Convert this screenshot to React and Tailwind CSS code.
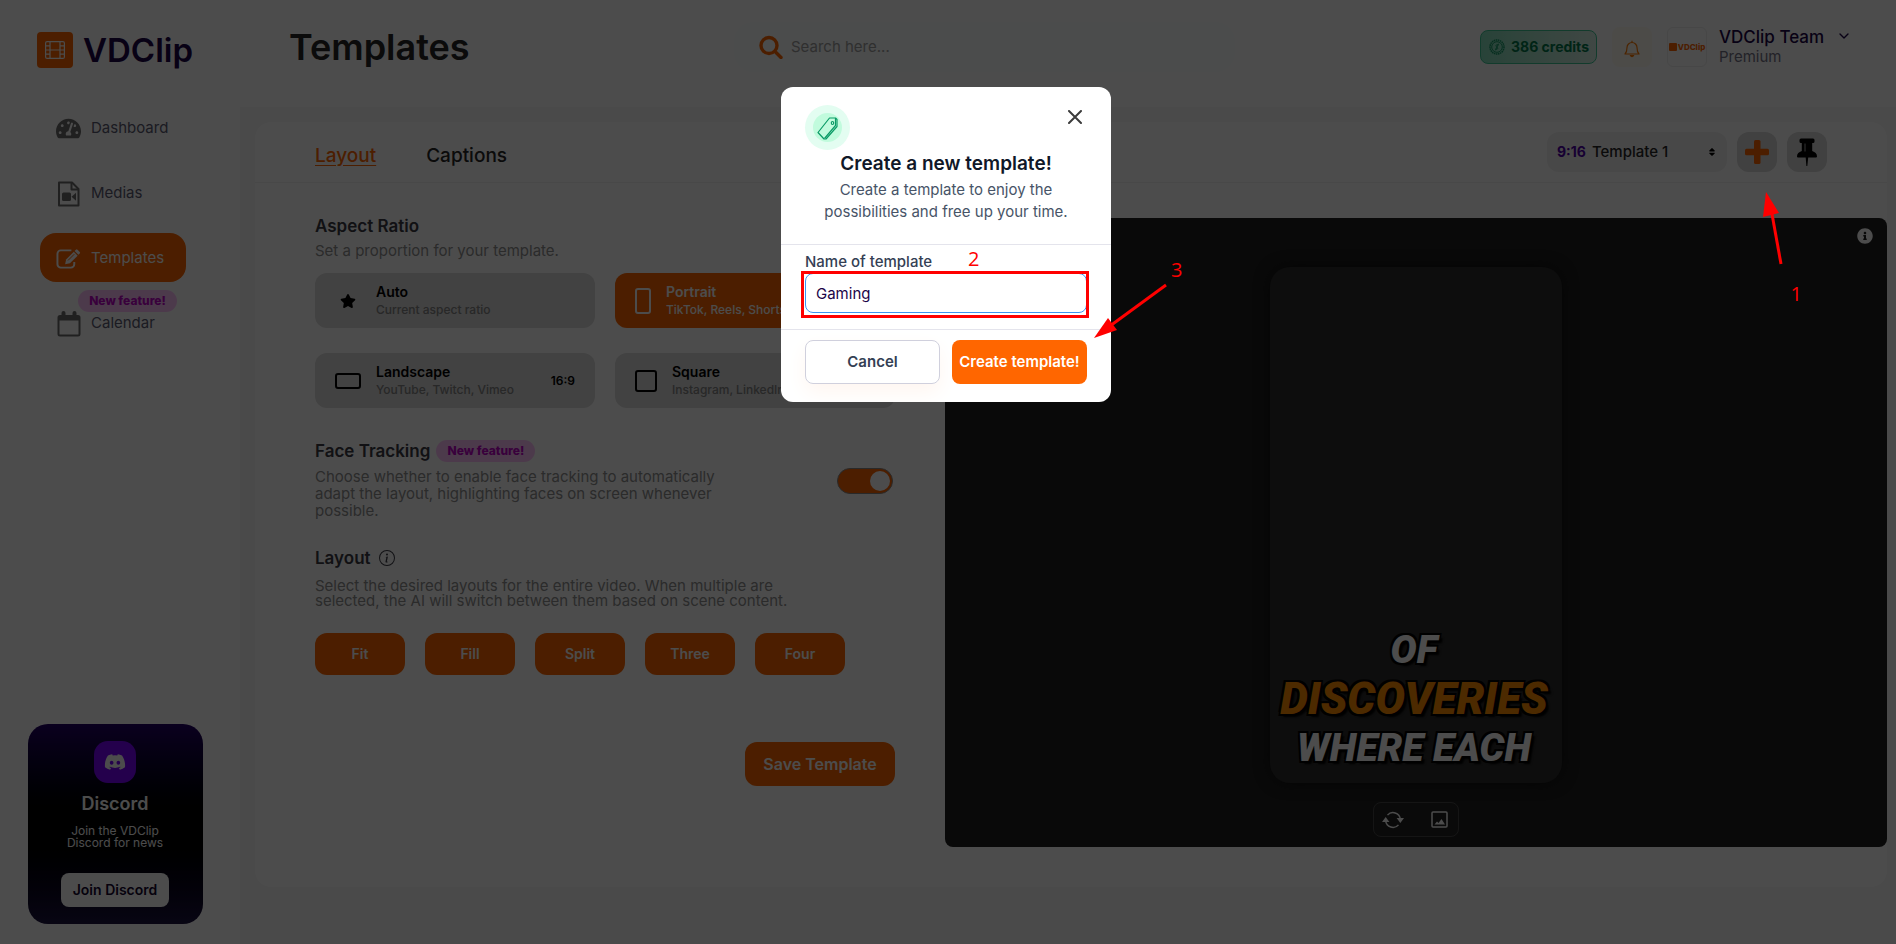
import React, { useState } from 'react';
import { FaDiscord, FaSort, FaStar, FaTachometerAlt, FaInfoCircle } from 'react-icons/fa';
import { BsInfoCircle } from 'react-icons/bs';
import { FiChevronDown } from 'react-icons/fi';

const MediaIcon = () => (
  <svg viewBox="0 0 24 26" className="h-[26px] w-6" fill="none" stroke="currentColor" strokeWidth="2" strokeLinejoin="round">
    <path d="M2 1.500h13l6.500 6.500v16.500H2z" />
    <path d="M14.500 1.500V8.500h7" />
    <rect x="5" y="11.500" width="9" height="8.500" rx="1.500" fill="currentColor" stroke="none" />
    <path d="M14.500 15.700l4.500-4v8z" fill="currentColor" stroke="none" />
  </svg>
);

const EditIcon = () => (
  <svg viewBox="0 0 26 22" className="h-[22px] w-[26px]" fill="none" stroke="currentColor" strokeWidth="2">
    <path d="M16 2H5a3.500 3.500 0 0 0-3.500 3.500v11A3.500 3.500 0 0 0 5 20h10.500a3.500 3.500 0 0 0 3.500-3.500V14" />
    <path d="M9.500 16.500l1-5L18.500 3.500l4 4-8 8z" fill="currentColor" stroke="none" />
    <path d="M19.300 2.700l1.400-1.400a1.200 1.200 0 0 1 1.700 0l2.300 2.300a1.200 1.200 0 0 1 0 1.700l-1.400 1.400z" fill="currentColor" stroke="none" />
    <path d="M12.500 12.500l6.500-6.500" stroke="#ff6600" strokeWidth="1" />
  </svg>
);

const CalendarIcon = () => (
  <svg viewBox="0 0 24 26" className="h-[26px] w-6" fill="none" stroke="currentColor" strokeWidth="2">
    <rect x="1.500" y="5" width="21" height="19.500" rx="1.500" />
    <path d="M1.500 5h21v4.500h-21z" fill="currentColor" stroke="none" />
    <path d="M6.500 2v5M17.500 2v5" strokeWidth="4" strokeLinecap="round" />
  </svg>
);

const navItems = [
  { label: 'Dashboard', icon: <FaTachometerAlt className="text-[25px]" /> },
  { label: 'Medias', icon: <MediaIcon /> },
  { label: 'Templates', icon: <EditIcon />, active: true },
  { label: 'Calendar', icon: <CalendarIcon />, isNew: true }
];

const ratios = [
  { name: 'Auto', hint: 'Current aspect ratio', ratio: '', shape: 'star' },
  { name: 'Portrait', hint: 'TikTok, Reels, Shorts', ratio: '9:16', shape: 'w-4 h-[26px]' },
  { name: 'Landscape', hint: 'YouTube, Twitch, Vimeo', ratio: '16:9', shape: 'w-[26px] h-4' },
  { name: 'Square', hint: 'Instagram, LinkedIn', ratio: '1:1', shape: 'w-[22px] h-[22px]' }
];

const layouts = ['Fit', 'Fill', 'Split', 'Three', 'Four'];

const NewBadge = () => (
  <span className="flex h-[22px] w-[99px] items-center justify-center rounded-full bg-[#fdc4fb] text-xs font-extrabold text-[#c000c8]">
    New feature!
  </span>
);

const Sidebar = () => (
  <aside className="flex w-60 shrink-0 flex-col bg-white">
    <div className="flex h-[103px] items-start gap-[10px] pt-8 pl-[37px]">
      <div className="flex h-9 w-9 items-center justify-center rounded bg-[#ff6600]">
        <svg viewBox="0 0 20 18" className="h-[18px] w-5" fill="none" stroke="#fff" strokeWidth="1.2">
          <rect x="0.6" y="0.6" width="18.8" height="16.8" rx="1.5" />
          <path d="M5 .6v16.8M15 .6v16.8M5 9h10M.6 4.8H5M.6 9H5M.6 13.2H5M15 4.8h4.4M15 9h4.4M15 13.2h4.4" />
        </svg>
      </div>
      <span className="text-[33px] leading-9 font-semibold text-[#1b0448]">VDClip</span>
    </div>
    <nav className="flex flex-col gap-4 pl-10">
      {navItems.map((item) => (
        <a
          key={item.label}
          href="#"
          className={`relative flex h-[49px] w-[146px] items-center gap-[10px] rounded-2xl pt-[2px] pl-4 text-[15px] ${
            item.active ? 'bg-[#ff6600] text-white' : 'text-[#5b5b72]'
          }`}
        >
          <span className={`flex w-[25px] justify-center ${item.active ? 'text-white' : 'text-[#6d6d6d]'}`}>{item.icon}</span>
          {item.label}
          {item.isNew && (
            <span className="absolute -top-2 left-[38px]">
              <NewBadge />
            </span>
          )}
        </a>
      ))}
    </nav>
    <div className="mt-auto mb-5 ml-7 flex h-[200px] w-[175px] flex-col items-center rounded-[20px] bg-linear-to-b from-[#230068] via-black to-[#1b1340] pt-[17px] pr-px text-white">
      <div className="flex h-[42px] w-[42px] items-center justify-center rounded-[14px] bg-[#7a00ff]">
        <FaDiscord className="text-[22px]" />
      </div>
      <h3 className="mt-[7px] text-lg leading-7 font-semibold">Discord</h3>
      <p className="mt-[7px] text-center text-xs leading-3">
        Join the VDClip
        <br />
        Discord for news
      </p>
      <button className="mt-6 h-[34px] w-[108px] rounded-lg bg-white text-sm font-semibold text-[#14062f]">Join Discord</button>
    </div>
  </aside>
);

const Header = () => (
  <header className="flex h-[107px] items-start bg-white pt-[22px] pr-11 pl-[49px]">
    <h1 className="w-[445px] text-[36px] leading-[50px] font-semibold text-[#262626]">Templates</h1>
    <label className="flex h-[50px] w-[501px] items-center gap-2 rounded-[20px] bg-[#fafdfd] pl-[25px]">
      <svg viewBox="0 0 24 24" className="h-6 w-6" fill="none" stroke="#ff6600" strokeWidth="3.4" strokeLinecap="round">
        <circle cx="10" cy="10.500" r="8" />
        <path d="M17 17.500l5 5" />
      </svg>
      <input type="text" aria-label="Search" placeholder="Search here..." className="w-80 bg-transparent text-[15px] outline-none placeholder:text-[#9f9f9f]" />
    </label>
    <div className="ml-auto flex items-center pt-[5px]">
      <div className="flex h-[34px] w-[117px] items-center gap-[6px] rounded-lg border border-[#3cc795] bg-linear-to-r from-[#86dfbd] to-[#d5efe4] pl-2 text-sm font-bold whitespace-nowrap text-[#00794a]">
        <svg viewBox="0 0 16 16" className="h-4 w-4 shrink-0" fill="none" stroke="#149b68">
          <circle cx="8" cy="8" r="7" strokeWidth="1.500" strokeDasharray="1.500 .6" />
          <circle cx="8" cy="8" r="5.300" />
          <path d="M9.500 6c-2-1.300-3.500 1-1.800 1.900S9 11 6.300 10M9.600 4.700l-3.200 6.600" />
        </svg>
        386 credits
      </div>
      <button aria-label="Notifications" className="ml-[15px] flex h-10 w-10 items-center justify-center rounded-lg bg-[#fffaf1]">
        <svg viewBox="0 0 16 18" className="mt-1 h-[18px] w-4" fill="none" stroke="#ff7a00" strokeWidth="1.200">
          <path d="M1 14c2-2 2-3.500 2-6.500a5 5 0 0 1 10 0c0 3 0 4.500 2 6.500z" strokeLinejoin="round" />
          <path d="M8 2.500V.8M6.500 15.500a1.600 1.600 0 0 0 3 0z" fill="#ff7a00" />
        </svg>
      </button>
      <div className="ml-[15px] flex h-10 w-10 items-center justify-center gap-px rounded-md border border-[#ededed]">
        <span className="h-2 w-2 shrink-0 rounded-[1px] bg-[#ff6600]" />
        <span className="text-[8px] leading-none font-extrabold text-[#ff6600]">VDClip</span>
      </div>
      <div className="ml-3 w-[106px] whitespace-nowrap">
        <p className="text-[17px] leading-5 font-medium text-[#1b0448]">VDClip Team</p>
        <p className="text-[15px] leading-5 text-[#747286]">Premium</p>
      </div>
      <FiChevronDown className="mb-[22px] ml-[11px] text-base text-[#1b0448]" />
    </div>
  </header>
);

const CardHeader = () => (
  <div className="flex h-[61px] items-center justify-between border-b border-[#f0f0f0] px-[60px]">
    <div className="flex gap-[50px] pt-2 text-[19px] font-medium">
      <button className="text-[#ff6600] underline underline-offset-3">Layout</button>
      <button className="text-[#262626]">Captions</button>
    </div>
    <div className="flex gap-[10px]">
      <button className="flex h-10 w-[180px] items-center rounded-xl bg-[#f1f1f1] px-[10px] text-[15px] font-medium">
        <span className="text-sm font-bold text-[#4d00a8]">9:16</span>
        <span className="ml-[6px] text-[#262626]">Template 1</span>
        <FaSort className="ml-auto text-[10px]" />
      </button>
      <button aria-label="New template" className="flex h-10 w-10 items-center justify-center rounded-xl bg-[#d9d9d9] text-[#ff6600]">
        <svg viewBox="0 0 24 24" className="h-6 w-6" fill="currentColor">
          <rect x="9" y="0" width="6.500" height="24" rx="1.500" />
          <rect x="0" y="8.800" width="24" height="6.500" rx="1.500" />
        </svg>
      </button>
      <button aria-label="Pin template" className="flex h-10 w-10 items-center justify-center rounded-xl bg-[#d9d9d9]">
        <svg viewBox="0 0 20 28" className="h-7 w-5" fill="currentColor">
          <path d="M4 .5h12a1.500 1.500 0 0 1 1.500 1.500v1.500A1.500 1.500 0 0 1 16 5h-.8v8c3 1 4.800 2.700 4.800 5.500a1 1 0 0 1-1 1h-7.800L10.300 28h-.9l-.7-8.500H1a1 1 0 0 1-1-1C0 15.700 1.800 14 4.800 13V5H4a1.500 1.500 0 0 1-1.500-1.500V2A1.500 1.500 0 0 1 4 .5z" />
          <path d="M8 5.500v8" stroke="#d9d9d9" strokeWidth=".8" />
        </svg>
      </button>
    </div>
  </div>
);

const RatioCard = ({ item, selected, onSelect }) => (
  <button
    onClick={() => onSelect(item.name)}
    className={`flex h-[55px] items-center gap-[15px] rounded-xl px-5 text-left ${selected ? 'bg-[#ff6600] text-white' : 'bg-[#dcdcdc] text-black'}`}
  >
    {item.shape === 'star' ? (
      <FaStar className="w-[26px] text-sm" />
    ) : (
      <span className={`${item.shape} shrink-0 rounded-[3px] border-2 border-current`} />
    )}
    <span className="flex-1">
      <span className="block text-sm leading-[18px] font-semibold">{item.name}</span>
      <span className={`block text-xs leading-[18px] font-medium ${selected ? 'text-white' : 'text-[#858585]'}`}>{item.hint}</span>
    </span>
    <span className="text-xs font-semibold">{item.ratio}</span>
  </button>
);

const LayoutPanel = () => {
  const [ratio, setRatio] = useState('Portrait');
  const [tracking, setTracking] = useState(true);

  return (
    <div className="flex w-[580px] shrink-0 flex-col pt-[31px]">
      <h2 className="text-[17px] leading-6 font-semibold text-[#3b3b44]">Aspect Ratio</h2>
      <p className="pt-[2px] text-[15px] leading-[22px] text-[#8f8f8f]">Set a proportion for your template.</p>
      <div className="mt-[11px] grid grid-cols-2 gap-x-5 gap-y-[25px]">
        {ratios.map((item) => (
          <RatioCard key={item.name} item={item} selected={ratio === item.name} onSelect={setRatio} />
        ))}
      </div>

      <div className="mt-8 flex items-center justify-between pr-[2px]">
        <div className="w-[420px]">
          <div className="flex items-center gap-[6px]">
            <h2 className="text-[17px] leading-[22px] font-semibold text-[#3b3b44]">Face Tracking</h2>
            <NewBadge />
          </div>
          <p className="mt-[6px] text-[15px] leading-[17px] text-[#8f8f8f]">
            Choose whether to enable face tracking to automatically
            <br />
            adapt the layout, highlighting faces on screen whenever
            <br />
            possible.
          </p>
        </div>
        <label className="relative mt-[2px] h-[26px] w-14">
          <input
            type="checkbox"
            aria-label="Face tracking"
            checked={tracking}
            onChange={() => setTracking(!tracking)}
            className="peer h-full w-full appearance-none rounded-full border border-[#8a8a8a] bg-gray-300 checked:bg-[#ff6600]"
          />
          <span className="absolute top-[3px] left-[3px] h-5 w-5 rounded-full bg-white peer-checked:left-[33px]" />
        </label>
      </div>

      <div className="mt-[27px] flex items-center gap-2 text-[#3b3b44]">
        <h2 className="text-[17px] leading-6 font-semibold">Layout</h2>
        <BsInfoCircle />
      </div>
      <p className="mt-2 text-[15px] leading-[15px] text-[#8f8f8f]">
        Select the desired layouts for the entire video. When multiple are
        <br />
        selected, the AI will switch between them based on scene content.
      </p>
      <div className="mt-[25px] flex gap-5">
        {layouts.map((name) => (
          <button key={name} className="h-[42px] w-[90px] rounded-xl bg-[#ff6600] text-sm font-semibold text-white">
            {name}
          </button>
        ))}
      </div>
      <button className="mt-[67px] h-11 w-[150px] self-end rounded-xl bg-[#ff6600] text-base font-semibold text-white">Save Template</button>
    </div>
  );
};

const captionShadow = '[text-shadow:-2px_-2px_0_#000,2px_-2px_0_#000,-2px_2px_0_#000,3px_3px_2px_#000]';

const Preview = () => (
  <div className="relative mt-[35px] flex h-[629px] flex-1 flex-col items-center rounded-lg bg-[#1e1e1e] pt-[49px]">
    <FaInfoCircle className="absolute top-[10px] right-[14px] text-base text-white" />
    <div
      className={`flex h-[516px] w-[292px] flex-col items-center justify-end rounded-[20px] bg-[#2c2c2c] pr-1 pb-3 font-['Roboto',sans-serif] font-black text-white italic shadow-[0_0_15px_#101010] ${captionShadow}`}
    >
      <span className="text-[39px] leading-[46px]">OF</span>
      <span className="text-[44px] leading-[52px] text-[#ff8c00]">DISCOVERIES</span>
      <span className="text-[39px] leading-[46px] whitespace-nowrap">WHERE EACH</span>
    </div>
    <div className="mt-[19px] flex h-[35px] w-[86px] items-center justify-between rounded-lg border border-[#484848] bg-[#242424] px-2 text-white">
      <button aria-label="Refresh">
        <svg viewBox="0 0 24 24" className="h-[22px] w-[22px]" fill="none" stroke="currentColor" strokeWidth="1.600">
          <path d="M4 13a8 8 0 0 0 14 4.300M20 11A8 8 0 0 0 6 6.700" />
          <path d="M1.500 13.500L4 10l2.500 3.500zM17.500 10.500h5L20 14z" fill="currentColor" />
        </svg>
      </button>
      <button aria-label="Background image">
        <svg viewBox="0 0 20 20" className="h-5 w-5" fill="none" stroke="currentColor" strokeWidth="1.500">
          <rect x="2" y="2" width="15" height="15" rx="1" />
          <path d="M4.500 14.500l2.500-3 1.500 1.500 3-4 3.500 5.500z" fill="currentColor" stroke="none" />
        </svg>
      </button>
    </div>
  </div>
);

const TemplateModal = () => {
  const [name, setName] = useState('Gaming');

  return (
    <div role="dialog" aria-labelledby="modal-title" className="relative w-[330px] rounded-xl bg-white">
      <div className="border-b border-[#e4e4ec] px-6 pt-[18px] pb-[21px] text-center">
        <div className="flex items-start justify-between">
          <div className="flex h-[45px] w-[45px] items-center justify-center rounded-full bg-[#e3fdf1]">
            <div className="flex h-[29px] w-[29px] items-center justify-center rounded-full bg-[#c1fbdd]">
              <svg viewBox="0 0 24 24" className="h-6 w-6" fill="none" stroke="#0a9b66" strokeWidth="1.200" strokeLinejoin="round">
                <path d="M13.500 2h6l1.500 1.500v7L10 23H8L2 16.500z" />
                <path d="M19.500 2v7.500L8.500 22.500" />
                <ellipse cx="16.500" cy="7" rx="1.200" ry="1.500" />
              </svg>
            </div>
          </div>
          <button aria-label="Close" className="p-[5px]">
            <svg viewBox="0 0 14 14" className="h-[14px] w-[14px]" fill="none" stroke="#3b3b3b" strokeWidth="2" strokeLinecap="round">
              <path d="M1 1l12 12M13 1L1 13" />
            </svg>
          </button>
        </div>
        <h2 id="modal-title" className="text-[19px] leading-7 font-semibold text-[#101828]">Create a new template!</h2>
        <p className="mt-px text-[15px] leading-[22px] text-[#475467]">
          Create a template to enjoy the
          <br />
          possibilities and free up your time.
        </p>
      </div>
      <div className="border-b border-[#e4e4ec] px-6 pt-[6px] pb-4">
        <label htmlFor="template-name" className="block text-[15px] leading-[22px] font-medium text-[#344054]">Name of template</label>
        <input
          id="template-name"
          value={name}
          onChange={(e) => setName(e.target.value)}
          className="block h-10 w-full rounded-lg border border-[#3b93f0] px-[10px] text-[15px] text-[#1b0448] outline-none"
        />
      </div>
      <div className="grid grid-cols-2 gap-3 overflow-hidden rounded-b-xl px-6 pt-[10px] pb-[18px] text-[15px] font-semibold">
        <button className="h-11 rounded-lg border border-[#d0d0dd] text-[#344054] shadow-[0_8px_20px_#fff6f0]">Cancel</button>
        <button className="h-11 rounded-lg bg-[#ff6600] whitespace-nowrap text-white">Create template!</button>
      </div>
      <div className="pointer-events-none absolute top-[184px] left-5 h-[47px] w-[288px] border-3 border-[#ff0000]" />
      <span className="absolute top-[160px] left-[187px] font-['Open_Sans',sans-serif] text-xl leading-6 text-[#ff0000]">2</span>
      <span className="absolute top-[171px] left-[390px] font-['Open_Sans',sans-serif] text-xl leading-6 text-[#ff0000]">3</span>
      <svg viewBox="0 0 74 56" className="absolute top-[196px] left-[312px] h-14 w-[74px]">
        <path d="M73 2L17 43" stroke="#ff0000" strokeWidth="3" />
        <path d="M1 55L15 35 24 47z" fill="#ff0000" />
      </svg>
    </div>
  );
};

const App = () => (
  <div className="relative min-h-screen font-['Inter',sans-serif]">
    <div className="flex min-h-screen">
      <Sidebar />
      <div className="flex flex-1 flex-col bg-[#f7f7f7]">
        <Header />
        <main className="flex-1 pt-[15px] pr-[9px] pb-[57px] pl-[15px]">
          <div className="h-full rounded-2xl bg-white">
            <CardHeader />
            <div className="flex gap-[50px] pl-[60px]">
              <LayoutPanel />
              <Preview />
            </div>
          </div>
        </main>
      </div>
    </div>

    <div className="absolute inset-0 flex items-start justify-center bg-black/70 pt-[87px] pr-1">
      <TemplateModal />
      {/* pointer to the new template button */}
      <div className="absolute top-48 right-[94px] flex w-[39px] flex-col text-[#ff0000]">
        <svg viewBox="0 0 20 73" className="h-[73px] w-5">
          <path d="M9 22l9 50" stroke="currentColor" strokeWidth="3" />
          <path d="M3 0l13 21L0 25z" fill="currentColor" />
        </svg>
        <span className="mt-[17px] self-end font-['Open_Sans',sans-serif] text-xl leading-6">1</span>
      </div>
    </div>
  </div>
);

export default App;
